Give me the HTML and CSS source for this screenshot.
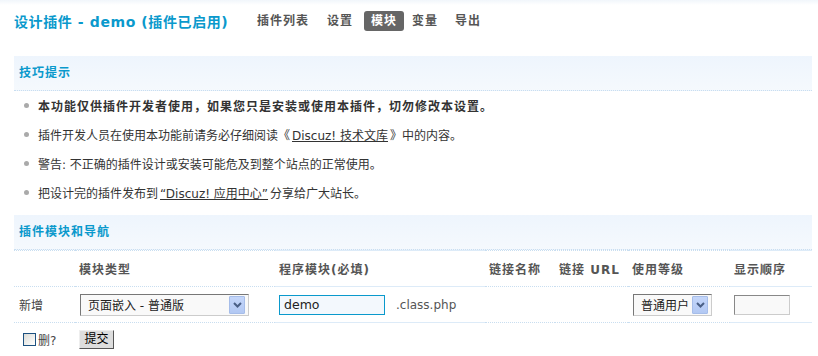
FILE: index.html
```html
<!DOCTYPE html>
<html lang="zh">
<head>
<meta charset="utf-8">
<title>设计插件</title>
<link rel="stylesheet" href="styles.css">
</head>
<body>
<div class="topbar"></div>
<div class="header">
  <h3 class="title">设计插件 - demo (插件已启用)</h3>
  <ul class="nav">
    <li class="nav-item">插件列表</li>
    <li class="nav-item">设置</li>
    <li class="nav-item active">模块</li>
    <li class="nav-item">变量</li>
    <li class="nav-item">导出</li>
  </ul>
</div>
<div class="main">
  <div class="sec-h">技巧提示</div>
  <ul class="tips">
    <li class="tip strong">本功能仅供插件开发者使用，如果您只是安装或使用本插件，切勿修改本设置。</li>
    <li class="tip">插件开发人员在使用本功能前请务必仔细阅读《 <a class="lnk">Discuz! 技术文库</a> 》中的内容。</li>
    <li class="tip">警告: 不正确的插件设计或安装可能危及到整个站点的正常使用。</li>
    <li class="tip">把设计完的插件发布到 <a class="lnk">“Discuz! 应用中心”</a> 分享给广大站长。</li>
  </ul>
  <div class="sec-h sec-h2">插件模块和导航</div>
  <table class="tb">
    <colgroup>
      <col class="c1"><col class="c2"><col class="c3"><col class="c4"><col class="c5"><col class="c6"><col class="c7">
    </colgroup>
    <tr class="head">
      <th class="cell"></th>
      <th class="cell">模块类型</th>
      <th class="cell solid">程序模块(必填)</th>
      <th class="cell">链接名称</th>
      <th class="cell">链接 URL</th>
      <th class="cell">使用等级</th>
      <th class="cell solid">显示顺序</th>
    </tr>
    <tr class="row">
      <td class="cell first">新增</td>
      <td class="cell">
        <div class="select sel-type"><span class="sel-text">页面嵌入 - 普通版</span><span class="sel-btn"><svg width="9" height="6" viewBox="0 0 9 6"><path d="M1 1 L4.5 4.5 L8 1" fill="none" stroke="#4a5f86" stroke-width="2"/></svg></span></div>
      </td>
      <td class="cell solid">
        <div class="inline"><span class="input input-demo">demo</span><span class="suffix">.class.php</span></div>
      </td>
      <td class="cell"></td>
      <td class="cell"></td>
      <td class="cell">
        <div class="select sel-level"><span class="sel-text">普通用户</span><span class="sel-btn"><svg width="9" height="6" viewBox="0 0 9 6"><path d="M1 1 L4.5 4.5 L8 1" fill="none" stroke="#4a5f86" stroke-width="2"/></svg></span></div>
      </td>
      <td class="cell solid"><span class="input input-order"></span></td>
    </tr>
    <tr class="foot">
      <td class="fcell first"><span class="chk-wrap"><span class="chk"></span>删?</span></td>
      <td class="fcell" colspan="6"><span class="btn">提交</span></td>
    </tr>
  </table>
</div>
</body>
</html>
```
FILE: styles.css
```css
html, body {
  margin: 0;
  padding: 0;
  background: #fff;
}
body {
  font-family: "DejaVu Sans", "Noto Sans CJK SC", sans-serif;
  font-size: 12px;
  color: #333;
  width: 818px;
  height: 356px;
  overflow: hidden;
}
.topbar {
  height: 5px;
  background: linear-gradient(#f1f6fb, #fff);
}
.header {
  display: flex;
  align-items: center;
  height: 32px;
  padding-left: 14px;
}
.title {
  margin: 0;
  font-size: 14px;
  font-weight: bold;
  letter-spacing: 0.6px;
  color: #0a99cc;
  width: 236px;
  white-space: nowrap;
}
.nav {
  display: flex;
  gap: 4px;
  list-style: none;
  margin: 0;
  padding: 0;
}
.nav-item {
  height: 20px;
  line-height: 20px;
  padding: 0 7px;
  font-weight: bold;
  letter-spacing: 1px;
  color: #555;
  border-radius: 3px;
}
.nav-item.active {
  background: #666;
  color: #fff;
  margin-right: -3px;
}
.nav-item:last-child {
  margin-left: -1px;
}
.main {
  margin: 19px 6px 0 14px;
}
.sec-h {
  height: 34px;
  line-height: 34px;
  padding-left: 5px;
  font-weight: bold;
  letter-spacing: 1px;
  color: #0a99cc;
  background: linear-gradient(#eef5fd, #f5f9fd);
  border-bottom: 1px dotted #c9def0;
}
.sec-h2 {
  margin-top: 8px;
}
.tips {
  list-style: none;
  margin: 0;
  padding: 0;
}
.tip {
  display: flex;
  align-items: center;
  height: 29px;
  padding-left: 24px;
  position: relative;
  white-space: nowrap;
}
.tip::before {
  content: "";
  position: absolute;
  left: 10px;
  top: 12px;
  width: 5px;
  height: 5px;
  border-radius: 50%;
  background: #aaa;
}
.tip.strong {
  font-weight: bold;
  letter-spacing: 1px;
}
.lnk {
  color: #333;
  text-decoration: underline;
  margin: 0 2px;
}
.tb {
  border-collapse: collapse;
  table-layout: fixed;
  width: 798px;
}
.c1 { width: 61px; }
.c2 { width: 200px; }
.c3 { width: 210px; }
.c4 { width: 70px; }
.c5 { width: 73px; }
.c6 { width: 102px; }
.c7 { width: 82px; }
.cell {
  height: 35px;
  padding: 0 0 0 4px;
  text-align: left;
  vertical-align: middle;
  border-top: 1px dotted #c9def0;
  border-bottom: 1px dotted #c9def0;
  white-space: nowrap;
}
.cell.solid {
  border-top: 1px solid #ddebf8;
  border-bottom: 1px solid #ddebf8;
}
.cell.first, .fcell.first {
  padding-left: 5px;
}
.head .cell {
  font-weight: bold;
  letter-spacing: 1px;
  color: #555;
}
.row .cell {
  color: #444;
}
.select {
  display: flex;
  align-items: center;
  box-sizing: border-box;
  height: 22px;
  background: #f9f9f9;
  border: 1px solid #ccc;
  border-top-color: #777;
  border-left-color: #777;
  padding: 0 3px 0 7px;
  color: #222;
}
.sel-type { width: 169px; margin-left: 1px; }
.sel-level { width: 79px; margin-left: 1px; }
.sel-text { flex: 1; white-space: nowrap; }
.sel-btn {
  display: flex;
  align-items: center;
  justify-content: center;
  width: 14px;
  height: 16px;
  background: linear-gradient(#c4d6fa, #b2c8f3);
  border: 1px solid #a6bde9;
  border-radius: 1px;
}
.inline {
  display: flex;
  align-items: center;
  gap: 11px;
}
.input {
  display: inline-flex;
  align-items: center;
  box-sizing: border-box;
  height: 20px;
  vertical-align: middle;
}
.input-demo {
  width: 106px;
  border: 1px solid #0a99cc;
  background: #f3f8fd;
  padding-left: 4px;
  color: #222;
  font-size: 12.5px;
}
.suffix {
  color: #555;
}
.input-order {
  width: 56px;
  border: 1px solid #ccc;
  border-top-color: #888;
  border-left-color: #888;
  background: #f9f9f9;
}
.fcell {
  height: 33px;
  padding: 0 0 0 4px;
  vertical-align: middle;
}
.chk-wrap {
  display: flex;
  align-items: center;
  gap: 2px;
  margin-left: 4px;
  color: #444;
}
.chk {
  width: 11px;
  height: 11px;
  border: 1px solid #1d5180;
  background: linear-gradient(135deg, #dcdcd7, #fff);
}
.btn {
  display: inline-block;
  box-sizing: border-box;
  width: 35px;
  height: 19px;
  line-height: 17px;
  text-align: center;
  background: #ddd;
  border: 1px solid #eee;
  border-right-color: #555;
  border-bottom-color: #555;
  color: #000;
}
```
